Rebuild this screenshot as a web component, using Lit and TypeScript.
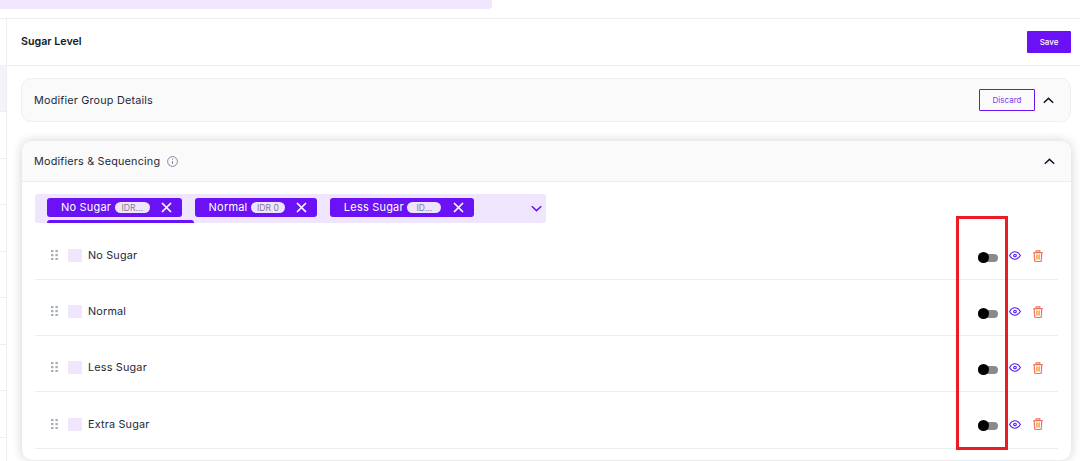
import { LitElement, html, css, svg } from "lit";
import { customElement } from "lit/decorators.js";

const chevUp = html`<svg class="chev" width="11" height="7" viewBox="0 0 11 7"><path d="M.8 5.8 5.5 1.4l4.7 4.4" fill="none" stroke="#101828" stroke-width="1.5"/></svg>`;
const cross = html`<svg class="x" width="11" height="11" viewBox="0 0 11 11"><path d="M1 1l9 9M10 1l-9 9" stroke="#fff" stroke-width="1.7" fill="none"/></svg>`;
const grip = html`<svg class="grip" width="7" height="10" viewBox="0 0 7 10">${[0, 4, 8].map((y) => svg`<rect x="0" y="${y}" width="2.4" height="2.2" fill="#a4adbb"/><rect x="4.4" y="${y}" width="2.4" height="2.2" fill="#a4adbb"/>`)}</svg>`;
const eye = html`<svg width="12" height="9" viewBox="0 0 12 9"><path d="M.6 4.5C2 2 3.8.8 6 .8s4 1.2 5.4 3.7C10 7 8.2 8.2 6 8.2S2 7 .6 4.5z" fill="none" stroke="#5218f5" stroke-width="1.1"/><circle cx="6" cy="4.5" r="1.3" fill="none" stroke="#5218f5" stroke-width="1.1"/></svg>`;
const trash = html`<svg width="10" height="12" viewBox="0 0 10 12"><path d="M.3 2.6h9.4M3.2 2.6V.8h3.6v1.8M1.2 2.6l.5 8c0 .5.4.9.9.9h4.8c.5 0 .9-.4.9-.9l.5-8" fill="none" stroke="#f4725f" stroke-width="1.2"/><path d="M3.9 4.6v4.8M6.1 4.6v4.8" stroke="#f79a2c" stroke-width="1.4"/></svg>`;
const info = html`<svg width="11" height="11" viewBox="0 0 11 11"><circle cx="5.5" cy="5.5" r="4.9" fill="none" stroke="#7f8ba3" stroke-width="1"/><path d="M5.5 5v3M5.5 2.7v1.1" stroke="#7f8ba3" stroke-width="1"/></svg>`;

@customElement("app-root")
export class AppRoot extends LitElement {
  static styles = css`
    :host { display: block; width: 1080px; height: 461px; overflow: hidden; background: #fff; font-family: Inter, "Liberation Sans", sans-serif; color: #1d2939; position: relative; }
    * { box-sizing: border-box; }
    .topbar { width: 492px; height: 9px; background: #efe5fd; border-radius: 0 0 4px 0; }
    .frame { margin-top: 9px; border-top: 1px solid #eceef0; display: flex; height: 443px; }
    .rail { width: 6px; display: flex; flex-direction: column; }
    .rail div { height: 46.5px; flex: none; border-bottom: 1px solid #eceef0; }
    .rail .g { background: #f2f4f7; }
    .main { flex: 1; border-left: 1px solid #eceef0; min-width: 0; }
    .head { height: 47px; border-bottom: 1px solid #eceef0; display: flex; align-items: center; justify-content: space-between; padding: 0 9px 2px 14px; }
    .title { font-size: 10.7px; font-weight: 600; color: #101828; }
    .save { width: 44px; height: 22px; background: #6a11f5; color: #fff; border-radius: 1px; font-size: 8px; font-weight: 500; display: flex; align-items: center; justify-content: center; margin-top: 2px; }
    .group { margin: 12px 9px 0 14px; height: 44px; background: #fafafa; border: 1px solid #eff0f1; border-radius: 10px; display: flex; align-items: center; padding: 0 16px 0 12px; font-size: 10.8px; letter-spacing: .2px; }
    .grow { flex: 1; }
    .discard { width: 56px; height: 22px; border: 1px solid #6a11f5; border-radius: 1px; color: #7a3cf0; font-size: 8px; letter-spacing: 0; display: flex; align-items: center; justify-content: center; margin-right: 8px; }
    .card { margin: 19px 9px 0 15px; height: 319px; border-radius: 10px; box-shadow: 0 0 11px rgba(16,24,40,.2); background: #fff; }
    .cardhead { height: 41px; background: #fafafa; border-bottom: 1px solid #eceef0; border-radius: 10px 10px 0 0; display: flex; align-items: center; padding: 0 16px 0 12px; font-size: 10.8px; letter-spacing: .2px; gap: 7px; }
    .body { padding: 12px 13px 0 13px; }
    .select { width: 511px; height: 29px; background: #efe5fd; border-radius: 3px; position: relative; display: flex; padding: 4px 0 0 12px; gap: 12.4px; overflow: hidden; margin-bottom: 1px; }
    .chip { height: 19px; background: #6a11f5; color: #fff; border-radius: 3px; display: flex; align-items: center; font-size: 11px; letter-spacing: .2px; padding: 0 10px 2px 14px; gap: 3.5px; }
    .chip .x { margin-left: 8px; margin-top: 2px; }
    .pill { background: #efe5fd; color: #7c7a96; border-radius: 6px; height: 11px; font-size: 8.6px; letter-spacing: 0; display: flex; align-items: center; justify-content: center; margin-top: 2px; }
    .under { position: absolute; left: 12px; top: 26px; width: 147px; height: 8px; background: #6a11f5; border-radius: 3px 3px 0 0; }
    .caret { position: absolute; right: 4px; top: 11px; }
    .row { height: 56px; border-bottom: 1px solid #eceef0; display: flex; align-items: center; font-size: 10.8px; letter-spacing: .2px; padding: 8px 15px 0 16px; }
    .row:last-of-type { height: 57px; }
    .grip { margin-right: 10px; margin-top: -1px; }
    .box { width: 14px; height: 13px; background: #efe5fd; margin-right: 6px; }
    .toggle { width: 20px; height: 8px; background: #8a8a8a; border-radius: 4px; position: relative; margin: 4px 11px 0 0; }
    .toggle::before { content: ""; position: absolute; left: 0; top: -2px; width: 11px; height: 11px; border-radius: 50%; background: #000; }
    .eye { display: flex; margin-right: 12px; }
    .trash { display: flex; }
    .redbox { position: absolute; left: 956px; top: 216px; width: 52px; height: 234px; border: 3px solid #ed1c24; }
  `;

  render() {
    const chips: [string, string, number][] = [["No Sugar", "IDR...", 35], ["Normal", "IDR 0", 34], ["Less Sugar", "ID...", 34]];
    const rows = ["No Sugar", "Normal", "Less Sugar", "Extra Sugar"];
    return html`
      <div class="topbar"></div>
      <div class="frame">
        <div class="rail">
          <div></div><div class="g"></div><div></div><div></div><div></div><div></div><div></div><div></div><div></div>
        </div>
        <div class="main">
          <div class="head"><span class="title">Sugar Level</span><span class="save">Save</span></div>
          <div class="group"><span>Modifier Group Details</span><span class="grow"></span><span class="discard">Discard</span>${chevUp}</div>
          <div class="card">
            <div class="cardhead"><span>Modifiers &amp; Sequencing</span>${info}<span class="grow"></span>${chevUp}</div>
            <div class="body">
              <div class="select">
                ${chips.map(([n, p, w]) => html`<div class="chip"><span>${n}</span><span class="pill" style="width:${w}px">${p}</span>${cross}</div>`)}
                <div class="under"></div>
                <svg class="caret" width="11" height="7" viewBox="0 0 11 7"><path d="M.8 1.2 5.5 5.6l4.7-4.4" fill="none" stroke="#6a11f5" stroke-width="1.5"/></svg>
              </div>
              ${rows.map((r) => html`<div class="row">${grip}<span class="box"></span><span>${r}</span><span class="grow"></span><span class="toggle"></span><span class="eye">${eye}</span><span class="trash">${trash}</span></div>`)}
            </div>
          </div>
        </div>
      </div>
      <div class="redbox"></div>
    `;
  }
}
